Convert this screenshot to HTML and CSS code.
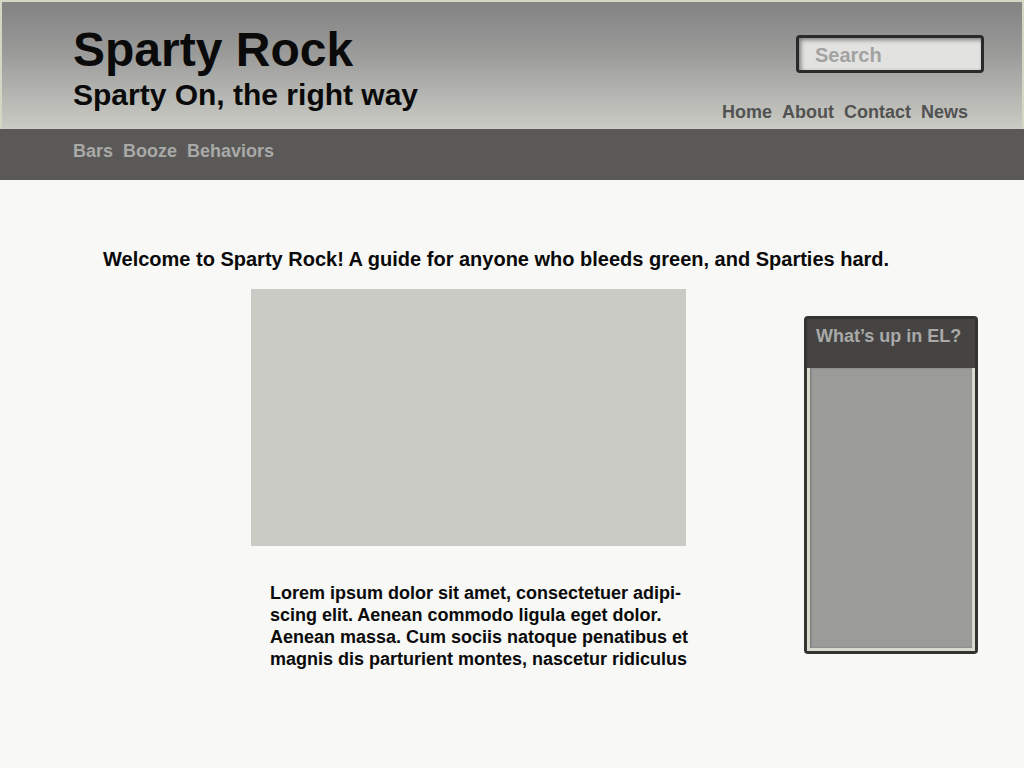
FILE: index.html
```html
<!DOCTYPE html>
<html lang="en">
<head>
<meta charset="utf-8">
<title>Sparty Rock</title>
<link rel="stylesheet" href="styles.css">
</head>
<body>
<header class="masthead">
  <div class="brand">
    <h1 class="brand-title">Sparty Rock</h1>
    <p class="brand-tagline">Sparty On, the right way</p>
  </div>
  <div class="masthead-right">
    <input class="search" type="text" placeholder="Search">
    <nav class="top-nav">
      <a href="#">Home</a>
      <a href="#">About</a>
      <a href="#">Contact</a>
      <a href="#">News</a>
    </nav>
  </div>
</header>
<nav class="sub-nav">
  <a href="#">Bars</a>
  <a href="#">Booze</a>
  <a href="#">Behaviors</a>
</nav>
<main class="content">
  <p class="welcome">Welcome to Sparty Rock! A guide for anyone who bleeds green, and Sparties hard.</p>
  <div class="columns">
    <section class="feature">
      <div class="feature-image"></div>
      <p class="feature-text">Lorem ipsum dolor sit amet, consectetuer adipi-<br>scing elit. Aenean commodo ligula eget dolor.<br>Aenean massa. Cum sociis natoque penatibus et<br>magnis dis parturient montes, nascetur ridiculus</p>
    </section>
    <aside class="sidebar">
      <h2 class="sidebar-title">What’s up in EL?</h2>
      <div class="sidebar-body"></div>
    </aside>
  </div>
</main>
</body>
</html>
```
FILE: styles.css
```css
* { box-sizing: border-box; }
html, body { margin: 0; padding: 0; }
body {
  background: #f8f8f6;
  font-family: "Liberation Sans", Arial, sans-serif;
  font-weight: bold;
  color: #0a0a0a;
  width: 1024px;
  height: 768px;
  overflow: hidden;
}
a { text-decoration: none; }

.masthead {
  height: 129px;
  display: flex;
  justify-content: space-between;
  padding: 0 38px 0 71px;
  background: linear-gradient(to bottom, #838383 0%, #9a9a99 40%, #cbcbc5 100%);
  border-top: 2px solid #d6d6c4;
  border-left: 2px solid #d6d6c4;
  border-right: 2px solid #d6d6c4;
}
.brand { padding-top: 20px; }
.brand-title {
  margin: 0;
  font-size: 48px;
  line-height: 55px;
  font-weight: bold;
  color: #0a0a0a;
}
.brand-tagline {
  margin: 0;
  font-size: 30px;
  line-height: 35px;
  color: #0a0a0a;
}
.masthead-right {
  display: flex;
  flex-direction: column;
  align-items: flex-end;
  padding-top: 33px;
}
.search {
  width: 188px;
  height: 38px;
  border: 3px solid #2a2a2a;
  border-radius: 4px;
  background: #e2e2e0;
  box-shadow: inset 2px 2px 4px rgba(0,0,0,0.45);
  padding: 3px 0 0 16px;
  font-family: "Liberation Sans", Arial, sans-serif;
  font-weight: bold;
  font-size: 20px;
  color: #333;
  outline: none;
}
.search::placeholder { color: #a2a2a2; }
.top-nav {
  display: flex;
  gap: 10px;
  margin-top: 29px;
  padding-right: 16px;
}
.top-nav a {
  font-size: 18px;
  line-height: 21px;
  color: #525252;
}

.sub-nav {
  height: 51px;
  background: #5a5957;
  display: flex;
  gap: 10px;
  padding: 12px 0 0 73px;
}
.sub-nav a {
  font-size: 18px;
  line-height: 21px;
  color: #a9a9a8;
}

.content { padding: 0; }
.welcome {
  margin: 68px 0 0 103px;
  font-size: 20px;
  line-height: 23px;
  color: #0a0a0a;
}
.columns {
  display: flex;
  margin-top: 18px;
  padding-left: 251px;
}
.feature { width: 435px; }
.feature-image {
  height: 257px;
  background: #cbcbc5;
}
.feature-text {
  margin: 36px 0 0 19px;
  font-size: 18px;
  line-height: 22px;
  color: #0a0a0a;
  white-space: nowrap;
}
.sidebar {
  margin-left: 118px;
  margin-top: 27px;
  width: 174px;
  height: 338px;
  border: 3px solid #343431;
  border-radius: 4px;
  background: #454443;
  display: flex;
  flex-direction: column;
}
.sidebar-title {
  margin: 0;
  height: 49px;
  padding: 6px 0 0 9px;
  font-size: 18px;
  line-height: 22px;
  color: #a9a9a8;
}
.sidebar-body {
  flex: 1;
  background: #9b9b9a;
  border: 3px solid #d9d9cd;
  border-top: none;
  box-shadow: inset 1px 0 2px rgba(0,0,0,0.25);
}
```
